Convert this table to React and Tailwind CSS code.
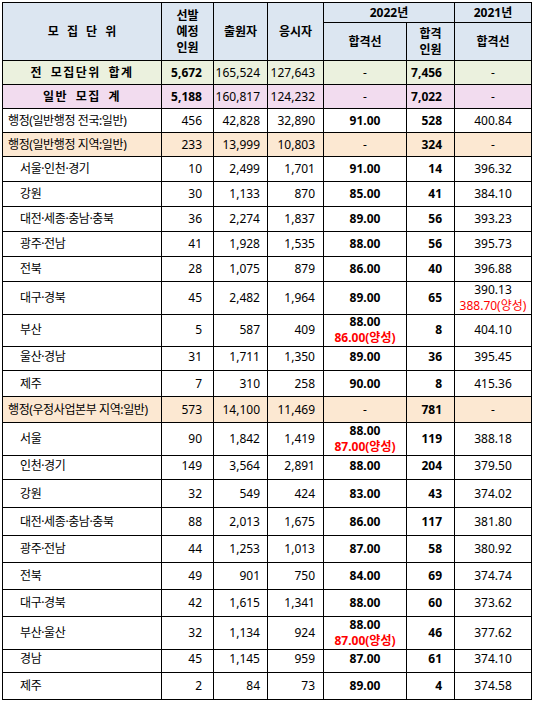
import React from 'react';
import clsx from 'clsx';

const GRID = 'grid grid-cols-[159px_52px_54px_56px_83px_48px_77px]';

const GREEN = 'bg-[#ebf1de]';
const PINK = 'bg-[#f2dcef]';
const BEIGE = 'bg-[#fce8d2]';

// kind: total = centered bold name, group = name at left edge, sub = indented region
const rows = [
  { kind: 'total', name: '전 모집단위 합계', bg: GREEN, h: 'h-[24px]', v: ['5,672', '165,524', '127,643', '-', '7,456', '-'] },
  { kind: 'total', name: '일반 모집 계', bg: PINK, h: 'h-[24px]', v: ['5,188', '160,817', '124,232', '-', '7,022', '-'] },
  { kind: 'group', name: '행정(일반행정 전국:일반)', h: 'h-[24px]', v: ['456', '42,828', '32,890', '91.00', '528', '400.84'] },
  { kind: 'group', name: '행정(일반행정 지역:일반)', bg: BEIGE, h: 'h-[24px]', v: ['233', '13,999', '10,803', '-', '324', '-'] },
  { kind: 'sub', name: '서울·인천·경기', h: 'h-[25px]', v: ['10', '2,499', '1,701', '91.00', '14', '396.32'] },
  { kind: 'sub', name: '강원', h: 'h-[25px]', v: ['30', '1,133', '870', '85.00', '41', '384.10'] },
  { kind: 'sub', name: '대전·세종·충남·충북', h: 'h-[25px]', v: ['36', '2,274', '1,837', '89.00', '56', '393.23'] },
  { kind: 'sub', name: '광주·전남', h: 'h-[25px]', v: ['41', '1,928', '1,535', '88.00', '56', '395.73'] },
  { kind: 'sub', name: '전북', h: 'h-[25px]', v: ['28', '1,075', '879', '86.00', '40', '396.88'] },
  { kind: 'sub', name: '대구·경북', h: 'h-[32px]', v: ['45', '2,482', '1,964', '89.00', '65', ['390.13', '388.70(양성)']] },
  { kind: 'sub', name: '부산', h: 'h-[30px]', v: ['5', '587', '409', ['88.00', '86.00(양성)'], '8', '404.10'] },
  { kind: 'sub', name: '울산·경남', h: 'h-[27px]', v: ['31', '1,711', '1,350', '89.00', '36', '395.45'] },
  { kind: 'sub', name: '제주', h: 'h-[26px]', v: ['7', '310', '258', '90.00', '8', '415.36'] },
  { kind: 'group', name: '행정(우정사업본부 지역:일반)', bg: BEIGE, h: 'h-[26px]', v: ['573', '14,100', '11,469', '-', '781', '-'] },
  { kind: 'sub', name: '서울', h: 'h-[29px]', v: ['90', '1,842', '1,419', ['88.00', '87.00(양성)'], '119', '388.18'] },
  { kind: 'sub', name: '인천·경기', h: 'h-[28px]', v: ['149', '3,564', '2,891', '88.00', '204', '379.50'] },
  { kind: 'sub', name: '강원', h: 'h-[28px]', v: ['32', '549', '424', '83.00', '43', '374.02'] },
  { kind: 'sub', name: '대전·세종·충남·충북', h: 'h-[28px]', v: ['88', '2,013', '1,675', '86.00', '117', '381.80'] },
  { kind: 'sub', name: '광주·전남', h: 'h-[27px]', v: ['44', '1,253', '1,013', '87.00', '58', '380.92'] },
  { kind: 'sub', name: '전북', h: 'h-[27px]', v: ['49', '901', '750', '84.00', '69', '374.74'] },
  { kind: 'sub', name: '대구·경북', h: 'h-[27px]', v: ['42', '1,615', '1,341', '88.00', '60', '373.62'] },
  { kind: 'sub', name: '부산·울산', h: 'h-[29px]', v: ['32', '1,134', '924', ['88.00', '87.00(양성)'], '46', '377.62'] },
  { kind: 'sub', name: '경남', h: 'h-[27px]', v: ['45', '1,145', '959', '87.00', '61', '374.10'] },
  { kind: 'sub', name: '제주', h: 'h-[27px]', v: ['2', '84', '73', '89.00', '4', '374.58'] },
];

// alignment per value column (선발, 출원자, 응시자, 합격선, 합격인원, 2021 합격선)
const colAlign = [
  'text-right pr-[11px]',
  'text-right pr-[7px]',
  'text-right pr-[8px]',
  'text-center',
  'text-right pr-[12px]',
  'text-center',
];

function Cell({ children, className }) {
  return (
    <div className={clsx('flex flex-col justify-center border-r border-b border-black', className)}>
      {children}
    </div>
  );
}

function Value({ v }) {
  if (Array.isArray(v)) {
    return (
      <>
        <span>{v[0]}</span>
        <span className="text-[#f00]">{v[1]}</span>
      </>
    );
  }
  return v;
}

function Row({ row }) {
  const nameCls =
    row.kind === 'total'
      ? 'text-center font-bold tracking-[1.5px] [word-spacing:3px]'
      : row.kind === 'group'
      ? 'pl-[5px] tracking-[-0.4px]'
      : 'pl-[17px] tracking-[-0.4px]';

  return (
    <div className={clsx(GRID, row.h, row.bg)}>
      <Cell className={nameCls}>{row.name}</Cell>
      {row.v.map((v, i) => {
        const bold =
          (i === 0 && row.kind === 'total') || i === 4 || (i === 3 && v !== '-');
        return (
          <Cell key={i} className={clsx(colAlign[i], bold && 'font-bold')}>
            <Value v={v} />
          </Cell>
        );
      })}
    </div>
  );
}

export default function App() {
  return (
    <div className="min-h-screen bg-white pt-[2px] pl-[2px] text-black text-[12px] leading-[16px] font-['Noto_Sans','Noto_Sans_CJK_KR',sans-serif]">
      <div className="w-[530px] border-l border-t border-black">
        {/* header */}
        <div className={clsx(GRID, 'grid-rows-[20px_38px] bg-[#dce6f1] font-bold text-center')}>
          <Cell className="row-span-2 [word-spacing:5px]">모 집 단 위</Cell>
          <Cell className="row-span-2">
            <span>선발</span>
            <span>예정</span>
            <span>인원</span>
          </Cell>
          <Cell className="row-span-2">출원자</Cell>
          <Cell className="row-span-2">응시자</Cell>
          <Cell className="col-span-2">2022년</Cell>
          <Cell>2021년</Cell>
          <Cell>합격선</Cell>
          <Cell>
            <span>합격</span>
            <span>인원</span>
          </Cell>
          <Cell>합격선</Cell>
        </div>

        {rows.map((row, i) => (
          <Row key={i} row={row} />
        ))}
      </div>
    </div>
  );
}
